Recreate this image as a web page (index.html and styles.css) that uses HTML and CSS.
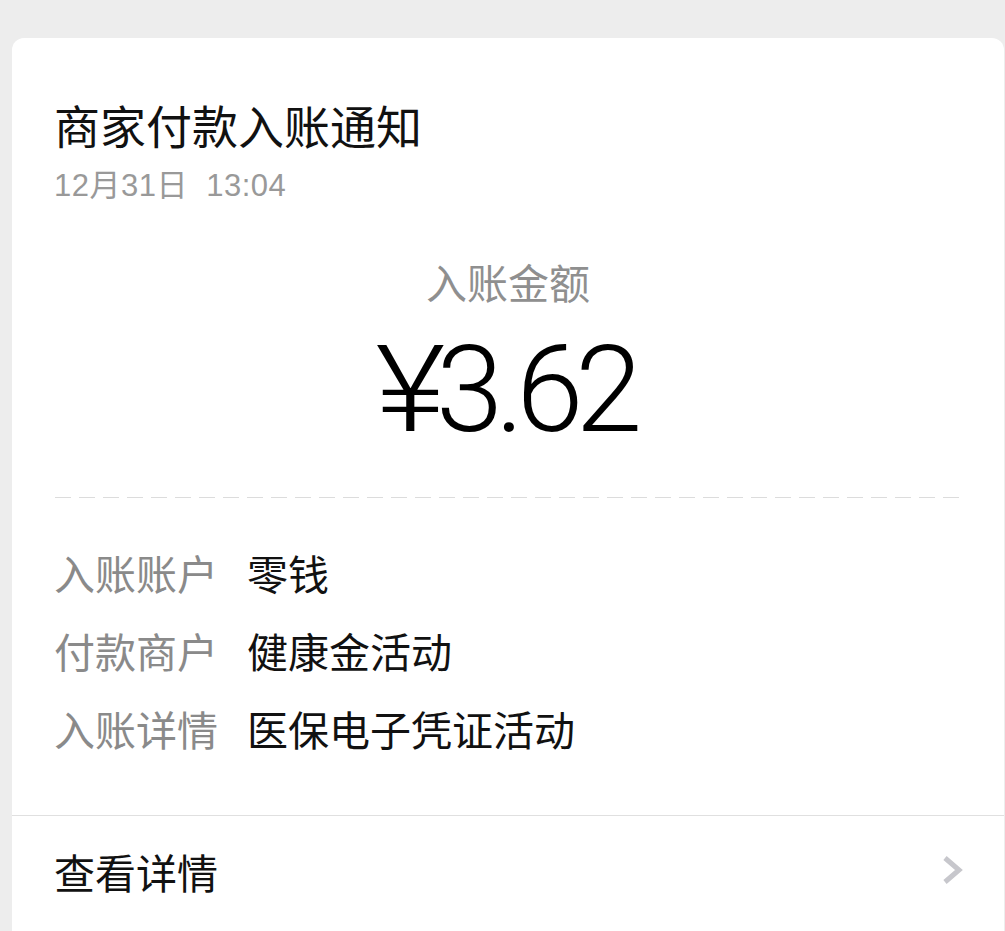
FILE: index.html
```html
<!DOCTYPE html>
<html lang="zh-CN">
<head>
<meta charset="utf-8">
<title>商家付款入账通知</title>
<link rel="stylesheet" href="styles.css">
</head>
<body>
<div class="card">
  <div class="header">
    <div class="title">商家付款入账通知</div>
    <div class="date">12月31日&nbsp;&nbsp;13:04</div>
  </div>
  <div class="amount-block">
    <div class="amount-label">入账金额</div>
    <div class="amount"><span class="yen">¥</span>3.62</div>
  </div>
  <div class="dash"></div>
  <div class="rows">
    <div class="row"><span class="label">入账账户</span><span class="value">零钱</span></div>
    <div class="row"><span class="label">付款商户</span><span class="value">健康金活动</span></div>
    <div class="row"><span class="label">入账详情</span><span class="value">医保电子凭证活动</span></div>
  </div>
  <div class="footer">
    <span class="footer-text">查看详情</span>
    <svg class="chevron" width="22" height="32" viewBox="0 0 22 32"><polyline points="3,3 17,15 3,27" fill="none" stroke="#c7c7cc" stroke-width="5" stroke-linejoin="miter"/></svg>
  </div>
</div>
</body>
</html>
```
FILE: styles.css
```css
html, body {
  margin: 0;
  padding: 0;
  background: #ededed;
  font-family: "Liberation Sans", "Noto Sans CJK SC", sans-serif;
}
.card {
  margin: 38px 1px 0 12px;
  background: #fff;
  border-radius: 12px 12px 0 0;
  overflow: hidden;
  height: 893px;
}
.header {
  padding: 62px 42px 0;
}
.title {
  font-size: 46px;
  line-height: 56px;
  color: #111;
}
.date {
  margin-top: 10px;
  font-size: 31px;
  line-height: 40px;
  letter-spacing: 0.5px;
  color: #999;
}
.amount-block {
  margin-top: 54px;
  text-align: center;
}
.amount-label {
  font-size: 41px;
  line-height: 50px;
  color: #8f8f8f;
}
.amount {
  margin-top: 15px;
  font-family: "Roboto", "Liberation Sans", sans-serif;
  font-weight: 300;
  font-size: 121px;
  line-height: 130px;
  letter-spacing: -8px;
  color: #000;
}
.yen {
  display: inline-block;
  transform: scaleX(1.12);
  transform-origin: right center;
}
.dash {
  margin: 42px 42px 0 43px;
  height: 1px;
  background: repeating-linear-gradient(to right, #dcdcdc 0 16px, transparent 16px 24px);
}
.rows {
  padding: 35px 42px 48px;
}
.row {
  display: flex;
  align-items: center;
  height: 78px;
  font-size: 41px;
}
.label {
  width: 164px;
  margin-right: 29px;
  color: #8a8a8a;
}
.value {
  color: #111;
}
.footer {
  border-top: 1px solid #e0e0e0;
  height: 110px;
  display: flex;
  align-items: center;
  justify-content: space-between;
  padding: 0 40px 4px 42px;
}
.footer-text {
  font-size: 41px;
  color: #111;
}
.chevron {
  display: block;
}
```
